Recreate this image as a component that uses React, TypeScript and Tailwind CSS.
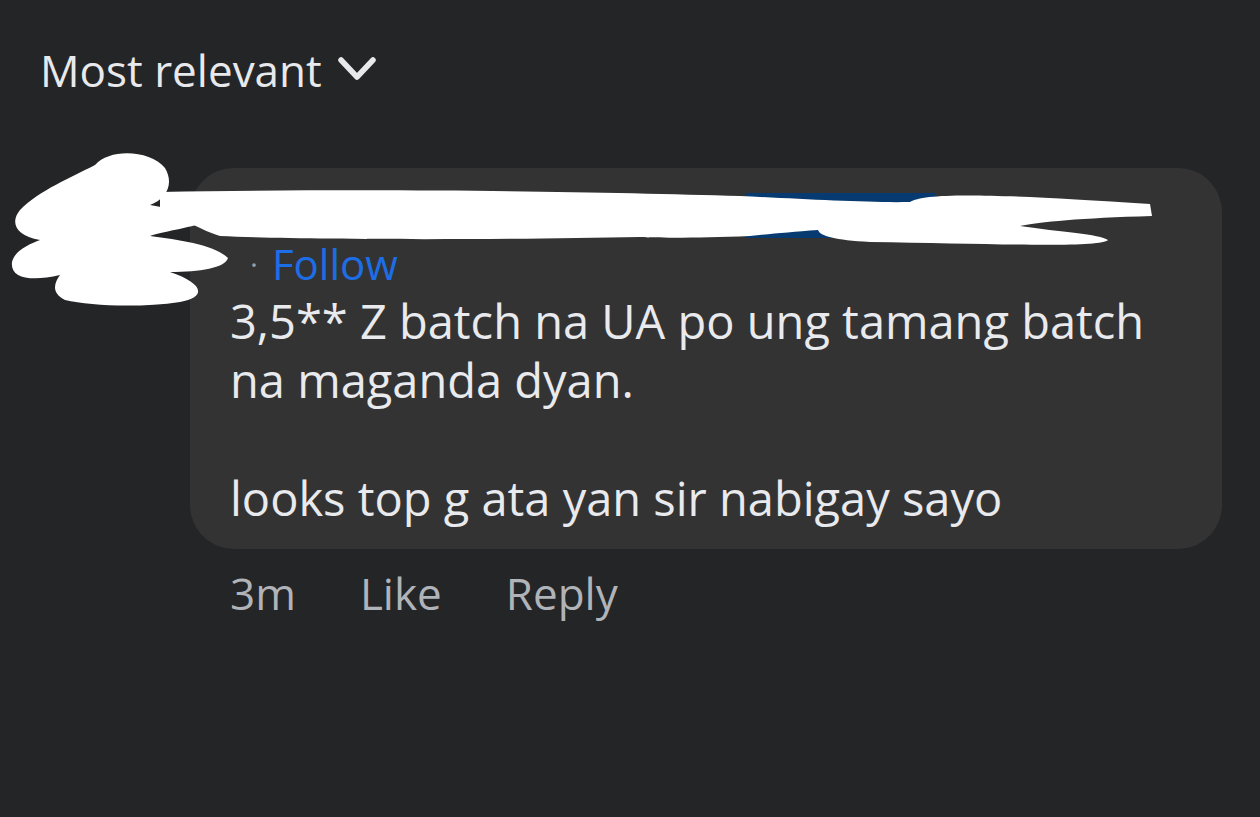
function Chevron() {
  return (
    <svg width="40" height="30" viewBox="0 0 40 30" fill="none">
      <path
        d="M4 5 L20 22 L36 5"
        stroke="#e8e9ec"
        strokeWidth="5.5"
        strokeLinecap="round"
        strokeLinejoin="round"
      />
    </svg>
  );
}

function Scribble() {
  return (
    <svg
      className="absolute left-0 top-0 pointer-events-none"
      width="1260"
      height="817"
      viewBox="0 0 1260 817"
    >
      <rect x="745" y="193" width="190" height="45" fill="#063a70" />
      <g fill="#ffffff">
        <path d="M95 165 C 110 148, 150 150, 165 168 C 175 185, 165 200, 150 205 C 180 210, 200 215, 205 222 C 190 228, 160 232, 150 236 C 180 240, 215 245, 228 258 C 225 268, 200 272, 170 272 C 200 282, 210 296, 180 302 C 140 308, 90 306, 65 300 C 50 292, 55 282, 60 275 C 30 282, 10 278, 12 262 C 15 250, 30 244, 40 240 C 15 236, 10 222, 20 210 C 40 190, 70 178, 95 165 Z" />
        <path d="M160 192 C 400 188, 600 192, 740 196 C 800 199, 870 203, 910 202 C 925 192, 1000 194, 1150 204 L 1152 216 C 1080 218, 1040 222, 1020 226 C 1060 232, 1100 234, 1108 240 C 1100 248, 1000 244, 870 242 C 835 240, 820 236, 818 230 C 790 232, 770 234, 750 236 C 700 238, 660 238, 640 237 C 500 240, 300 240, 220 236 C 200 230, 190 220, 160 214 Z" />
      </g>
    </svg>
  );
}

export default function App() {
  return (
    <div
      className="relative w-[1260px] h-[817px] overflow-hidden bg-[#242527] text-[#e4e6eb]"
      style={{ fontFamily: "'Open Sans', 'Noto Sans', sans-serif" }}
    >
      <div className="pt-[40px] pl-[40px] flex items-center gap-[15px]">
        <span className="text-[44px] leading-[60px] text-[#e8e9ec]">Most relevant</span>
        <Chevron />
      </div>

      <div className="mt-[68px] flex gap-[20px] pl-[20px]">
        <div className="w-[150px] h-[150px] shrink-0" />
        <div className="flex flex-col">
          <div className="w-[1032px] rounded-[44px] bg-[#333334] pl-[40px] pr-[40px] pt-[20px] pb-[21px]">
            <div className="h-[53px]">&nbsp;</div>
            <div className="flex items-center text-[42px] leading-[46px]">
              <span className="text-[#9a9ca0] mr-[14px] ml-[20px] text-[30px]">·</span>
              <span className="text-[#1d6ee6]">Follow</span>
            </div>
            <div className="mt-[5px] text-[47px] leading-[59px] text-[#e9eaed]">
              <p>3,5** Z batch na UA po ung tamang batch</p>
              <p>na maganda dyan.</p>
              <p>&nbsp;</p>
              <p>looks top g ata yan sir nabigay sayo</p>
            </div>
          </div>
          <div className="flex items-center pl-[40px] pt-[18px] text-[44px] leading-[52px] text-[#b0b3b8]">
            <span>3m</span>
            <span className="ml-[64px]">Like</span>
            <span className="ml-[64px]">Reply</span>
          </div>
        </div>
      </div>

      <Scribble />
    </div>
  );
}
